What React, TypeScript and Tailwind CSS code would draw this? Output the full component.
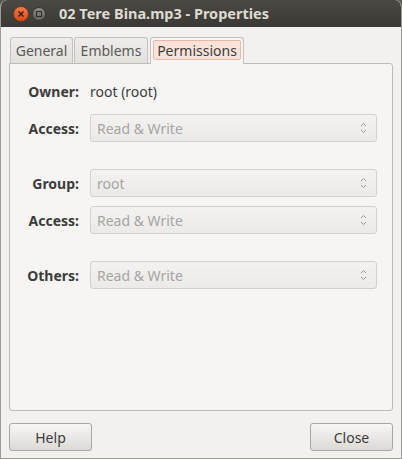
import React from "react";

const font = { fontFamily: '"Noto Sans", "Open Sans", sans-serif' };

function Spin() {
  return (
    <svg width="7" height="14" viewBox="0 0 7 14" className="shrink-0">
      <path d="M1 5 L3.5 2.5 L6 5" fill="none" stroke="#9a9995" strokeWidth="1" />
      <path d="M1 9 L3.5 11.5 L6 9" fill="none" stroke="#9a9995" strokeWidth="1" />
    </svg>
  );
}

function Combo({ text }: { text: string }) {
  return (
    <div className="flex h-[28px] w-[287px] items-center justify-between rounded-[3px] border border-[#d3d1cd] bg-gradient-to-b from-[#f3f2f1] to-[#ebeae8] pl-[6px] pr-[9px] text-[14px] text-[#a6a5a2]">
      <span>{text}</span>
      <Spin />
    </div>
  );
}

function Row({ label, children, mt = 0 }: { label: string; children: React.ReactNode; mt?: number }) {
  return (
    <div className="flex items-center" style={{ marginTop: mt }}>
      <div className="w-[69px] text-right text-[14px] font-bold text-[#3c3c3c]">{label}</div>
      <div className="ml-[11px]">{children}</div>
    </div>
  );
}

export default function App() {
  return (
    <div className="w-[402px] h-[459px] bg-[#5c5b56]" style={font}>
      <div className="flex h-full w-full flex-col overflow-hidden rounded-t-[7px] bg-[#f2f1f0] border-x border-b border-[#9d9b96]">
        <div className="flex h-[27px] shrink-0 items-center bg-gradient-to-b from-[#4a4944] to-[#3a3935] pl-[12px]">
          <div className="flex h-[16px] w-[16px] items-center justify-center rounded-full bg-gradient-to-b from-[#f47a4a] to-[#d94615] border border-[#7a3a20]">
            <svg width="8" height="8" viewBox="0 0 8 8">
              <path d="M1.5 1.5 L6.5 6.5 M6.5 1.5 L1.5 6.5" stroke="#3a1a0e" strokeWidth="1.4" />
            </svg>
          </div>
          <div className="ml-[3px] flex h-[14px] w-[14px] items-center justify-center rounded-full bg-gradient-to-b from-[#8c8b86] to-[#63625e] border border-[#3a3935]">
            <div className="h-[6px] w-[6px] border border-[#2d2c29]" />
          </div>
          <div className="ml-[13px] text-[14.5px] font-bold text-[#dfdbd2]">02 Tere Bina.mp3 - Properties</div>
        </div>
        <div className="flex flex-1 flex-col px-[8px] pt-[10px]">
          <div className="flex items-end h-[26px] pl-[1px]">
            <div className="flex h-[26px] w-[63px] items-center justify-center rounded-t-[3px] border border-b-0 border-[#c3c1bc] bg-gradient-to-b from-[#eeedeb] to-[#e2e0dd] text-[14px] text-[#5a5a5a]">General</div>
            <div className="ml-[1px] flex h-[26px] w-[74px] items-center justify-center rounded-t-[3px] border border-b-0 border-[#c3c1bc] bg-gradient-to-b from-[#eeedeb] to-[#e2e0dd] text-[14px] text-[#5a5a5a]">Emblems</div>
            <div className="relative z-10 ml-[2px] h-[27px] w-[94px] -mb-[1px] rounded-t-[3px] border border-b-0 border-[#c3c1bc] bg-[#f6f5f4] px-[2px] pt-[2px]">
              <div className="flex h-[20px] items-center justify-center rounded-[2px] border border-[#e8b7a8] bg-[#fbe3da] text-[14px] text-[#3c3c3c]">Permissions</div>
            </div>
          </div>
          <div className="h-[348px] rounded-b-[3px] rounded-tr-[3px] border border-[#bdbbb6] bg-[#f6f5f4] pt-[15px]">
            <Row label="Owner:">
              <span className="text-[14px] text-[#3c3c3c]">root (root)</span>
            </Row>
            <Row label="Access:" mt={11}>
              <Combo text="Read & Write" />
            </Row>
            <Row label="Group:" mt={27}>
              <Combo text="root" />
            </Row>
            <Row label="Access:" mt={9}>
              <Combo text="Read & Write" />
            </Row>
            <Row label="Others:" mt={27}>
              <Combo text="Read & Write" />
            </Row>
          </div>
          <div className="mt-[12px] flex justify-between">
            <div className="flex h-[28px] w-[83px] items-center justify-center rounded-[3px] border border-[#a9a7a2] bg-gradient-to-b from-[#f7f6f5] to-[#dcdad6] text-[14px] text-[#3c3c3c]">Help</div>
            <div className="flex h-[28px] w-[83px] items-center justify-center rounded-[3px] border border-[#a9a7a2] bg-gradient-to-b from-[#f7f6f5] to-[#dcdad6] text-[14px] text-[#3c3c3c]">Close</div>
          </div>
        </div>
      </div>
    </div>
  );
}
